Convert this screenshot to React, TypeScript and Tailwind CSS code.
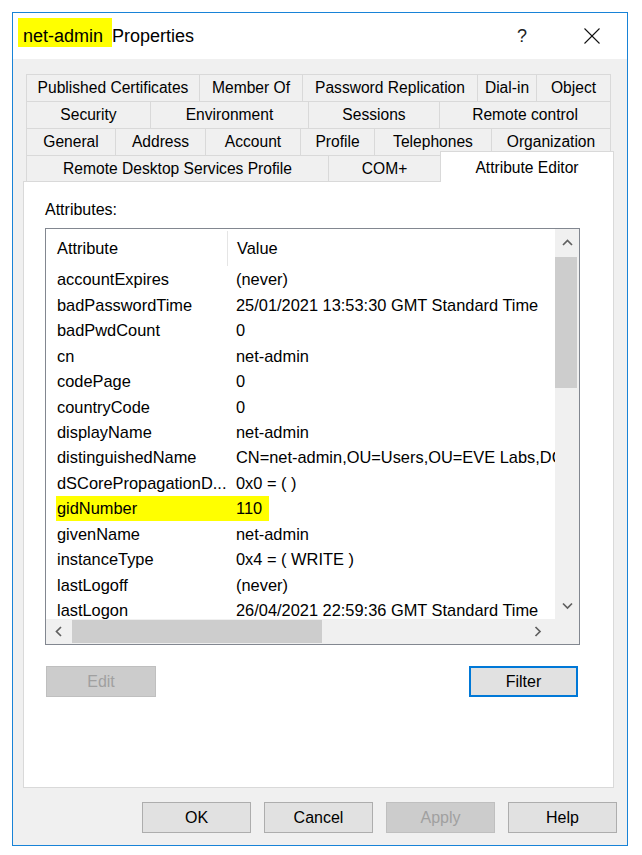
import React from "react";

const FONT = { fontFamily: '"Liberation Sans", Arial, sans-serif' };

type Tab = { label: string; w: number };

const tabRows: Tab[][] = [
  [
    { label: "Published Certificates", w: 173 },
    { label: "Member Of", w: 103 },
    { label: "Password Replication", w: 175 },
    { label: "Dial-in", w: 59 },
    { label: "Object", w: 75 },
  ],
  [
    { label: "Security", w: 124 },
    { label: "Environment", w: 158 },
    { label: "Sessions", w: 131 },
    { label: "Remote control", w: 172 },
  ],
  [
    { label: "General", w: 89 },
    { label: "Address", w: 90 },
    { label: "Account", w: 95 },
    { label: "Profile", w: 74 },
    { label: "Telephones", w: 117 },
    { label: "Organization", w: 120 },
  ],
];

const rows: [string, string][] = [
  ["accountExpires", "(never)"],
  ["badPasswordTime", "25/01/2021 13:53:30 GMT Standard Time"],
  ["badPwdCount", "0"],
  ["cn", "net-admin"],
  ["codePage", "0"],
  ["countryCode", "0"],
  ["displayName", "net-admin"],
  ["distinguishedName", "CN=net-admin,OU=Users,OU=EVE Labs,DC=eve,DC=local"],
  ["dSCorePropagationD...", "0x0 = ( )"],
  ["gidNumber", "110"],
  ["givenName", "net-admin"],
  ["instanceType", "0x4 = ( WRITE )"],
  ["lastLogoff", "(never)"],
  ["lastLogon", "26/04/2021 22:59:36 GMT Standard Time"],
];

function Chevron({ dir }: { dir: "up" | "down" | "left" | "right" }) {
  const pts =
    dir === "up"
      ? "1,6 5.5,1.5 10,6"
      : dir === "down"
      ? "1,1.5 5.5,6 10,1.5"
      : dir === "left"
      ? "6,1 1.5,5.5 6,10"
      : "1.5,1 6,5.5 1.5,10";
  const w = dir === "up" || dir === "down" ? 11 : 8;
  const h = dir === "up" || dir === "down" ? 8 : 11;
  return (
    <svg width={w} height={h} viewBox={`0 0 ${w} ${h}`}>
      <polyline points={pts} fill="none" stroke="#606060" strokeWidth="1.7" />
    </svg>
  );
}

function WinButton({
  label,
  disabled,
  focused,
  w = 109,
}: {
  label: string;
  disabled?: boolean;
  focused?: boolean;
  w?: number;
}) {
  const base =
    "h-[31px] flex items-center justify-center text-[16px] shrink-0";
  if (disabled)
    return (
      <div
        className={`${base} bg-[#cccccc] border border-[#bfbfbf] text-[#a0a0a0]`}
        style={{ width: w }}
      >
        {label}
      </div>
    );
  if (focused)
    return (
      <div
        className={`${base} bg-[#e1e1e1] border-2 border-[#0078d7] text-black`}
        style={{ width: w }}
      >
        {label}
      </div>
    );
  return (
    <div
      className={`${base} bg-[#e1e1e1] border border-[#adadad] text-black`}
      style={{ width: w }}
    >
      {label}
    </div>
  );
}

export default function App() {
  return (
    <div
      className="w-[642px] h-[855px] bg-white pt-[12px] pl-[12px]"
      style={FONT}
    >
      <div className="w-[616px] h-[834px] border border-[#1883d7] flex flex-col bg-[#f0f0f0]">
        {/* Title bar */}
        <div className="h-[46px] bg-white flex items-start pt-[5px] pl-[5px] shrink-0">
          <span className="bg-[#ffff00] h-[29px] pt-[6px] leading-[24px] pl-[5px] pr-[9px] text-[18px] text-black">
            net-admin
          </span>
          <span className="pt-[6px] leading-[24px] text-[18px] text-black">
            Properties
          </span>
          <span className="ml-auto w-[20px] text-center pt-[6px] leading-[24px] text-[18px] text-[#222]">
            ?
          </span>
          <div className="ml-[52px] mr-[27px] pt-[10px]">
            <svg width="16" height="16" viewBox="0 0 16 16">
              <line x1="0.5" y1="0.5" x2="15.5" y2="15.5" stroke="#111" strokeWidth="1.1" />
              <line x1="15.5" y1="0.5" x2="0.5" y2="15.5" stroke="#111" strokeWidth="1.1" />
            </svg>
          </div>
        </div>

        {/* Body */}
        <div className="flex-1 flex flex-col pl-[10px] pr-[13px] pt-[15px]">
          {/* Tabs */}
          <div className="px-[3px] flex flex-col text-[15.6px] text-black">
            {tabRows.map((r, i) => (
              <div key={i} className="flex h-[27px]">
                {r.map((t, j) => (
                  <div
                    key={t.label}
                    className={`shrink-0 flex items-center justify-center border-t border-l border-[#d9d9d9] whitespace-nowrap ${
                      j === r.length - 1 ? "border-r" : ""
                    }`}
                    style={{ width: t.w }}
                  >
                    {t.label}
                  </div>
                ))}
              </div>
            ))}
            <div className="flex h-[26px]">
              <div className="shrink-0 w-[302px] flex items-center justify-center border-t border-l border-[#d9d9d9] whitespace-nowrap">
                Remote Desktop Services Profile
              </div>
              <div className="shrink-0 w-[112px] flex items-center justify-center border-t border-l border-[#d9d9d9] whitespace-nowrap">
                COM+
              </div>
              <div className="relative z-10 shrink-0 w-[174px] h-[31px] -mt-[4px] flex items-start pt-[4px] justify-center bg-white border-t border-l border-r border-[#d9d9d9] whitespace-nowrap">
                Attribute Editor
              </div>
            </div>
          </div>

          {/* Panel */}
          <div className="h-[607px] border border-[#d9d9d9] bg-white pl-[21px] pt-[19px] flex flex-col text-[16px] text-black">
            <div className="leading-[18px]">Attributes:</div>

            <div className="mt-[9px] w-[535px] h-[417px] border border-[#828790] grid grid-cols-[509px_24px] grid-rows-[390px_25px] text-[16.4px]">
              {/* List content */}
              <div className="overflow-hidden whitespace-nowrap">
                <div className="h-[38px] flex items-center">
                  <div className="w-[181px] pl-[11px]">Attribute</div>
                  <div className="w-px h-[35px] bg-[#e5e5e5]" />
                  <div className="pl-[9px]">Value</div>
                </div>
                {rows.map(([a, v]) =>
                  a === "gidNumber" ? (
                    <div key={a} className="h-[25.45px] flex">
                      <div className="ml-[10px] w-[213px] flex items-center bg-[#ffff00]">
                        <div className="w-[171px] pl-[1px]">{a}</div>
                        <div className="pl-[9px]">{v}</div>
                      </div>
                    </div>
                  ) : (
                    <div key={a} className="h-[25.45px] flex items-center">
                      <div className="w-[181px] shrink-0 pl-[11px] overflow-hidden">{a}</div>
                      <div className="pl-[9px]">{v}</div>
                    </div>
                  )
                )}
              </div>

              {/* Vertical scrollbar */}
              <div className="bg-[#f0f0f0] flex flex-col">
                <div className="h-[27px] flex items-center justify-center">
                  <Chevron dir="up" />
                </div>
                <div className="h-[131px] mt-[1px] mr-[2px] bg-[#cdcdcd]" />
                <div className="flex-1" />
                <div className="h-[26px] flex items-center justify-center">
                  <Chevron dir="down" />
                </div>
              </div>

              {/* Horizontal scrollbar */}
              <div className="bg-[#f0f0f0] flex items-stretch">
                <div className="w-[26px] flex items-center justify-center">
                  <Chevron dir="left" />
                </div>
                <div className="w-[250px] my-[1px] bg-[#cdcdcd]" />
                <div className="flex-1" />
                <div className="w-[30px] flex items-center justify-center pr-[4px]">
                  <Chevron dir="right" />
                </div>
              </div>
              <div className="bg-[#f0f0f0]" />
            </div>

            <div className="mt-[21px] w-[535px] flex justify-between pl-[1px] pr-[2px]">
              <WinButton label="Edit" disabled w={110} />
              <WinButton label="Filter" focused w={109} />
            </div>
          </div>

          {/* Bottom buttons */}
          <div className="mt-[14px] ml-[119px] flex gap-[13px]">
            <WinButton label="OK" />
            <WinButton label="Cancel" />
            <WinButton label="Apply" disabled />
            <WinButton label="Help" />
          </div>
        </div>
      </div>
    </div>
  );
}
